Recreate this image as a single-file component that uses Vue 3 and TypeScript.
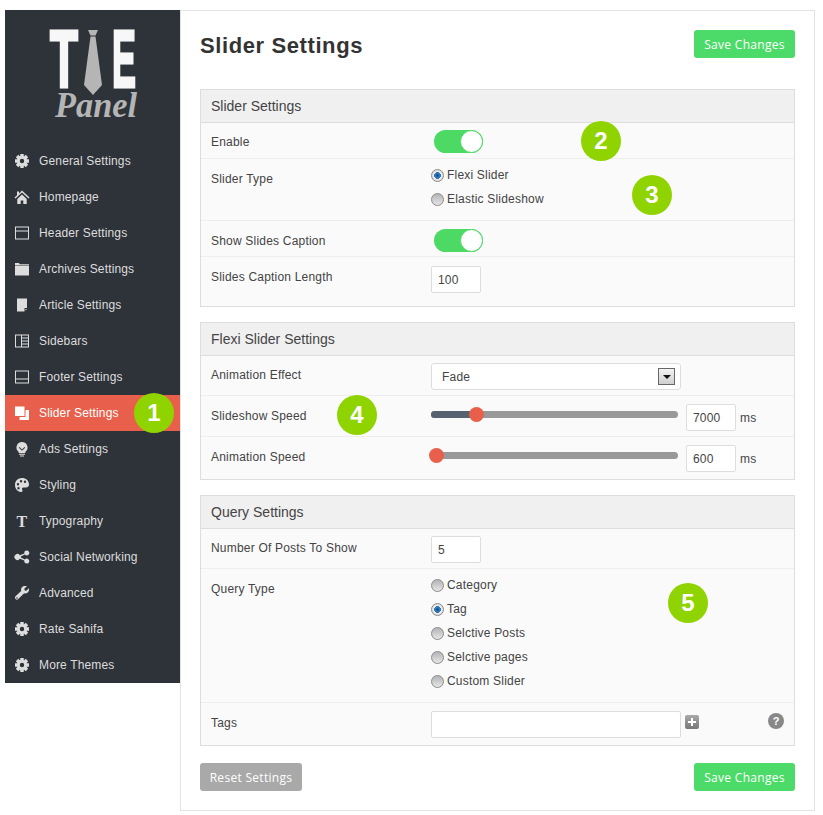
<template>
  <div class="page">
    <aside class="sidebar">
      <div class="logo">
        <svg viewBox="0 0 175 133" width="175" height="133">
          <text x="45" y="77" class="logo-big" textLength="28" lengthAdjust="spacingAndGlyphs">T</text>
          <path d="M83 20h10l-2.500 5.500h-5zM85.500 26.500h5L97 75l-9 10-9-10z" fill="#b5b5b5" />
          <text x="107" y="77" class="logo-big" textLength="24" lengthAdjust="spacingAndGlyphs">E</text>
          <text x="50" y="107" class="logo-script" textLength="82" lengthAdjust="spacingAndGlyphs">Panel</text>
        </svg>
      </div>
      <nav>
        <a v-for="item in menu" :key="item.label" href="#" class="nav-item" :class="{ active: item.label === 'Slider Settings' }">
          <svg class="nav-icon" viewBox="0 0 16 16" width="16" height="16">
            <text v-if="item.icon === 'type'" x="8" y="14" text-anchor="middle" class="type-glyph">T</text>
            <path v-else :d="icons[item.icon]" fill="currentColor" fill-rule="evenodd" />
          </svg>
          {{ item.label }}
        </a>
      </nav>
    </aside>

    <main class="content">
      <div class="title-row">
        <h1>Slider Settings</h1>
        <button type="button" class="btn btn-save">Save Changes</button>
      </div>

      <section class="panel">
        <h2>Slider Settings</h2>
        <div class="row row-toggle">
          <label>Enable</label>
          <button type="button" class="toggle" :class="{ off: !enable }" @click="enable = !enable"><span></span></button>
        </div>
        <div class="row row-type">
          <label>Slider Type</label>
          <div class="radios">
            <label v-for="t in sliderTypes" :key="t" class="radio">
              <i :class="{ on: sliderType === t }" @click="sliderType = t"></i>{{ t }}
            </label>
          </div>
        </div>
        <div class="row row-toggle row-show">
          <label>Show Slides Caption</label>
          <button type="button" class="toggle" :class="{ off: !caption }" @click="caption = !caption"><span></span></button>
        </div>
        <div class="row row-length">
          <label>Slides Caption Length</label>
          <input class="field small" type="text" v-model="captionLength" />
        </div>
      </section>

      <section class="panel">
        <h2>Flexi Slider Settings</h2>
        <div class="row row-select">
          <label>Animation Effect</label>
          <div class="select">Fade<span class="arrow"></span></div>
        </div>
        <div class="row row-range">
          <label>Slideshow Speed</label>
          <div class="range">
            <div class="fill" :style="{ width: '45px' }"></div>
            <span class="thumb" :style="{ left: '38px' }"></span>
          </div>
          <input class="field small" type="text" value="7000" />
          <span class="unit">ms</span>
        </div>
        <div class="row row-range">
          <label>Animation Speed</label>
          <div class="range">
            <span class="thumb" :style="{ left: '-2px' }"></span>
          </div>
          <input class="field small" type="text" value="600" />
          <span class="unit">ms</span>
        </div>
      </section>

      <section class="panel">
        <h2>Query Settings</h2>
        <div class="row row-number">
          <label>Number Of Posts To Show</label>
          <input class="field small" type="text" value="5" />
        </div>
        <div class="row row-query">
          <label>Query Type</label>
          <div class="radios">
            <label v-for="q in queryTypes" :key="q" class="radio">
              <i :class="{ on: queryType === q }" @click="queryType = q"></i>{{ q }}
            </label>
          </div>
        </div>
        <div class="row row-tags">
          <label>Tags</label>
          <input class="field wide" type="text" />
          <span class="plus"></span>
          <span class="help">?</span>
        </div>
      </section>

      <div class="footer-row">
        <button type="button" class="btn btn-reset">Reset Settings</button>
        <button type="button" class="btn btn-save">Save Changes</button>
      </div>
    </main>

    <!-- numbered callouts lying over the screenshot -->
    <span v-for="b in badges" :key="b.n" class="badge" :style="{ left: b.x + 'px', top: b.y + 'px' }">{{ b.n }}</span>
  </div>
</template>

<script setup lang="ts">
import { ref } from 'vue'

function gear(): string {
  let d = ''
  const cx = 8
  const cy = 8
  for (let i = 0; i < 8; i++) {
    const a = (i * Math.PI) / 4
    const pts: Array<[number, number]> = [
      [a - 0.36, 5.1],
      [a - 0.24, 7.2],
      [a + 0.24, 7.2],
      [a + 0.36, 5.1],
    ]
    for (const [t, r] of pts) {
      const x = cx + Math.cos(t) * r
      const y = cy + Math.sin(t) * r
      d += (d ? 'L' : 'M') + x.toFixed(2) + ' ' + y.toFixed(2)
    }
  }
  return d + 'Z M8 5.8a2.200 2.200 0 1 0 0 4.400a2.200 2.200 0 1 0 0-4.400Z'
}

const icons: Record<string, string> = {
  gear: gear(),
  home: 'M8 1.500 15.500 8.500l-1 1L8 3.600 1.500 9.500l-1-1 2.500-2.300V2.500h2v1.900zM3.300 10 8 5.600l4.700 4.400v5H9.300v-3.500H6.700V15H3.300z',
  header: 'M1 1.500h14v13H1zM2 2.500v11h12v-11zM2 5.500h12v1H2z',
  folder: 'M1 2h4l.7 1.200H15V4.500H1zM1 5h14v9.500H1z',
  article: 'M3 1.500h10v9.500h-2.500v3.500H3zM11.500 12v1.500l1.500-1.500z',
  sidebars: 'M1 1.500h14v13H1zM2 2.500v11h5v-11zM8 2.500v2h6v-2zM8 5.500v2h6v-2zM8 8.500v2h6v-2zM8 11.500v2h6v-2z',
  footer: 'M1 1.500h14v13H1zM2 2.500v11h12v-11zM2 9.500h12v1H2z',
  slides: 'M1 1.500h9.500v9.500H1zM11.500 5H15v10H5.500v-3h6z',
  bulb: 'M8 1a5.500 5.500 0 0 1 3.300 9.900V12H4.700v-1.100A5.500 5.500 0 0 1 8 1zM5.500 6 4.800 6.700 8 9.800l3.200-3.100-.7-.7L8 8.400zM5 12.800h6v1H5zM6 14.400h4v1H6z',
  palette: 'M8 1C3.800 1 1 4 1 8s3 7 6 7c1.800 0 1.800-1.400 1.200-2.200-.6-1-.1-2.200 1.300-2.200h2.500c2 0 3-1.400 3-3C15 3.600 12 1 8 1zM4 6a1.200 1.200 0 1 1 0 2.400A1.200 1.200 0 0 1 4 6zM7 3a1.200 1.200 0 1 1 0 2.400A1.200 1.200 0 0 1 7 3zM11 3.500a1.200 1.200 0 1 1 0 2.400 1.200 1.200 0 0 1 0-2.400zM4.500 10a1.200 1.200 0 1 1 0 2.400 1.200 1.200 0 0 1 0-2.400z',
  share: 'M12.800 1.500a2.500 2.500 0 1 1-1.900 4.100L6.900 7.500a3 3 0 0 1 0 1l4 1.900a2.500 2.500 0 1 1-.6 1.200L5.900 9.800a3 3 0 1 1 0-3.600l4.400-1.800a2.500 2.500 0 0 1 2.500-2.900z',
  wrench: 'M11.500 1c.6 0 1 .1 1.400.3L10.300 3.800l.4 1.600 1.600.4 2.500-2.600c.2.400.3.900.3 1.400a3.800 3.800 0 0 1-5 3.600L4.300 14a1.900 1.900 0 0 1-2.800-.1 1.900 1.900 0 0 1 0-2.600l5.700-5.300A3.800 3.800 0 0 1 11.500 1zM3 12.200a.8.800 0 1 0 0 1.600.8.800 0 0 0 0-1.600z',
}

const menu = [
  { label: 'General Settings', icon: 'gear' },
  { label: 'Homepage', icon: 'home' },
  { label: 'Header Settings', icon: 'header' },
  { label: 'Archives Settings', icon: 'folder' },
  { label: 'Article Settings', icon: 'article' },
  { label: 'Sidebars', icon: 'sidebars' },
  { label: 'Footer Settings', icon: 'footer' },
  { label: 'Slider Settings', icon: 'slides' },
  { label: 'Ads Settings', icon: 'bulb' },
  { label: 'Styling', icon: 'palette' },
  { label: 'Typography', icon: 'type' },
  { label: 'Social Networking', icon: 'share' },
  { label: 'Advanced', icon: 'wrench' },
  { label: 'Rate Sahifa', icon: 'gear' },
  { label: 'More Themes', icon: 'gear' },
]

const badges = [
  { n: 1, x: 134, y: 393 },
  { n: 2, x: 581, y: 121 },
  { n: 3, x: 632, y: 175 },
  { n: 4, x: 337, y: 395 },
  { n: 5, x: 668, y: 583 },
]

const sliderTypes = ['Flexi Slider', 'Elastic Slideshow']
const queryTypes = ['Category', 'Tag', 'Selctive Posts', 'Selctive pages', 'Custom Slider']

const enable = ref(true)
const caption = ref(true)
const sliderType = ref('Flexi Slider')
const queryType = ref('Tag')
const captionLength = ref('100')
</script>

<style>
html, body {
  margin: 0;
  background: #fff;
}
</style>

<style scoped>
* {
  box-sizing: border-box;
}

.page {
  position: relative;
  display: flex;
  align-items: flex-start;
  width: 823px;
  height: 815px;
  padding: 10px 8px 0 5px;
  font-family: "Liberation Sans", Arial, sans-serif;
  font-size: 12px;
  color: #444;
  overflow: hidden;
}

.sidebar {
  width: 175px;
  flex: none;
  background: #2e3239;
}

.logo {
  height: 133px;
}

.logo svg {
  display: block;
}

.logo-big {
  font-family: "Liberation Sans", sans-serif;
  font-weight: 700;
  font-size: 82px;
  fill: #f7f7f7;
  stroke: #f7f7f7;
  stroke-width: 3px;
}

.logo-script {
  font-family: "Liberation Serif", serif;
  font-style: italic;
  font-weight: 700;
  font-size: 36px;
  fill: #b5b5b5;
}

.nav-item {
  display: flex;
  align-items: center;
  height: 36px;
  padding-left: 9px;
  gap: 9px;
  color: #ddd;
  text-decoration: none;
  letter-spacing: 0.15px;
}

.nav-item.active {
  background: #e8604c;
  color: #fff;
}

.nav-icon {
  flex: none;
}

.type-glyph {
  font-family: "Liberation Serif", serif;
  font-weight: 700;
  font-size: 16px;
  fill: currentColor;
}

.content {
  width: 635px;
  height: 801px;
  padding: 0 19px;
  background: #fff;
  border: 1px solid #e3e3e3;
}

.title-row {
  display: flex;
  justify-content: space-between;
  align-items: flex-start;
  height: 78px;
  padding-top: 19px;
}

h1 {
  margin: 0;
  font-size: 22px;
  font-weight: 700;
  line-height: 32px;
  letter-spacing: 0.6px;
  color: #333;
}

.btn {
  height: 28px;
  border: 0;
  border-radius: 3px;
  color: #fff;
  font-family: "Open Sans", sans-serif;
  font-size: 12px;
  letter-spacing: 0.3px;
}

.btn-save {
  width: 101px;
  background: #4cdb68;
}

.btn-reset {
  width: 102px;
  background: #a9a9a9;
}

.panel {
  margin-bottom: 15px;
  background: #fafafa;
  border: 1px solid #ddd;
}

.panel h2 {
  margin: 0;
  height: 33px;
  padding: 0 10px;
  background: #f0f0f0;
  border-bottom: 1px solid #ddd;
  font-size: 14px;
  font-weight: 400;
  line-height: 32px;
  color: #444;
}

.row {
  display: flex;
  padding: 0 10px;
  border-bottom: 1px solid #eee;
  letter-spacing: 0.2px;
}

.row:last-child {
  border-bottom: 0;
}

.row > label {
  width: 220px;
  flex: none;
  line-height: 14px;
}

.row-toggle {
  height: 36px;
  padding-top: 7px;
  align-items: flex-start;
}

.row-toggle > label {
  padding-top: 5px;
}

.row-show {
  padding-top: 8px;
}

.row-type {
  height: 62px;
  padding-top: 13px;
}

.row-type .radios {
  margin-top: -9px;
}

.row-length {
  height: 49px;
  padding-top: 9px;
}

.row-length > label {
  padding-top: 4px;
}

.row-select {
  height: 40px;
  padding-top: 7px;
}

.row-select > label {
  padding-top: 5px;
}

.row-range {
  height: 41px;
  padding-top: 8px;
  align-items: flex-start;
}

.row-range:last-child {
  height: 42px;
}

.row-range > label {
  padding-top: 5px;
}

.row-number {
  height: 40px;
  padding-top: 7px;
}

.row-number > label {
  padding-top: 5px;
}

.row-query {
  height: 134px;
  padding-top: 13px;
}

.row-query .radios {
  margin-top: -9px;
}

.row-tags {
  height: 42px;
  padding-top: 8px;
  align-items: flex-start;
  position: relative;
}

.row-tags > label {
  padding-top: 5px;
}

.radios {
  display: flex;
  flex-direction: column;
}

.radio {
  display: flex;
  align-items: center;
  height: 24px;
  color: #444;
}

.radio i {
  width: 13px;
  height: 13px;
  margin-right: 3px;
  border-radius: 50%;
  border: 1px solid #8a8a8a;
  background: linear-gradient(#b4b4b4, #e6e6e6);
}

.radio i.on {
  background: radial-gradient(circle, #0a3f80 0, #2d83c9 30%, #2d6ea8 40%, #eee 46%, #ccc 100%);
}

.toggle {
  display: flex;
  justify-content: flex-end;
  width: 49px;
  height: 23px;
  margin-left: 3px;
  padding: 0;
  border: 0;
  border-radius: 12px;
  background: #4cd964;
}

.toggle.off {
  justify-content: flex-start;
  background: #ccc;
}

.toggle span {
  width: 23px;
  height: 23px;
  border-radius: 50%;
  background: #fff;
  border: 1px solid #4cd964;
}

.field {
  height: 27px;
  padding: 0 6px;
  border: 1px solid #ddd;
  border-radius: 2px;
  background: #fff;
  font-family: "Liberation Sans", Arial, sans-serif;
  font-size: 12px;
  letter-spacing: 0.2px;
  color: #444;
  outline: none;
}

.small {
  width: 50px;
}

.wide {
  width: 250px;
}

.select {
  display: flex;
  justify-content: space-between;
  align-items: center;
  width: 250px;
  height: 27px;
  padding: 0 5px 0 10px;
  border: 1px solid #ddd;
  border-radius: 3px;
  background: #fff;
}

.arrow {
  position: relative;
  width: 17px;
  height: 17px;
  border: 1px solid #666;
  background: linear-gradient(#f3f3f3, #cfcfcf);
}

.arrow::after {
  content: "";
  position: absolute;
  left: 4px;
  top: 6px;
  border: 4px solid transparent;
  border-top: 4px solid #111;
  border-bottom: 0;
}

.range {
  position: relative;
  width: 247px;
  height: 7px;
  margin: 7px 8px 0 0;
  border-radius: 4px;
  background: #999;
}

.fill {
  height: 7px;
  border-radius: 4px 0 0 4px;
  background: #566270;
}

.thumb {
  position: absolute;
  top: -4px;
  width: 15px;
  height: 15px;
  border-radius: 50%;
  background: #e8604c;
}

.unit {
  margin: 7px 0 0 4px;
  line-height: 14px;
}

.plus {
  position: relative;
  width: 14px;
  height: 14px;
  margin: 4px 0 0 4px;
  border-radius: 2px;
  background: linear-gradient(#aaa, #777);
}

.plus::before,
.plus::after {
  content: "";
  position: absolute;
  background: #fff;
}

.plus::before {
  left: 3px;
  top: 6px;
  width: 8px;
  height: 2px;
}

.plus::after {
  left: 6px;
  top: 3px;
  width: 2px;
  height: 8px;
}

.help {
  position: absolute;
  right: 10px;
  top: 10px;
  width: 16px;
  height: 16px;
  border-radius: 50%;
  background: #888;
  color: #fff;
  font-weight: 700;
  font-size: 11px;
  line-height: 16px;
  text-align: center;
  letter-spacing: 0;
}

.footer-row {
  display: flex;
  justify-content: space-between;
  margin-top: 17px;
}

.badge {
  position: absolute;
  width: 40px;
  height: 40px;
  border-radius: 50%;
  background: #8fd400;
  color: #fff;
  font-size: 24px;
  font-weight: 700;
  line-height: 40px;
  text-align: center;
}
</style>
